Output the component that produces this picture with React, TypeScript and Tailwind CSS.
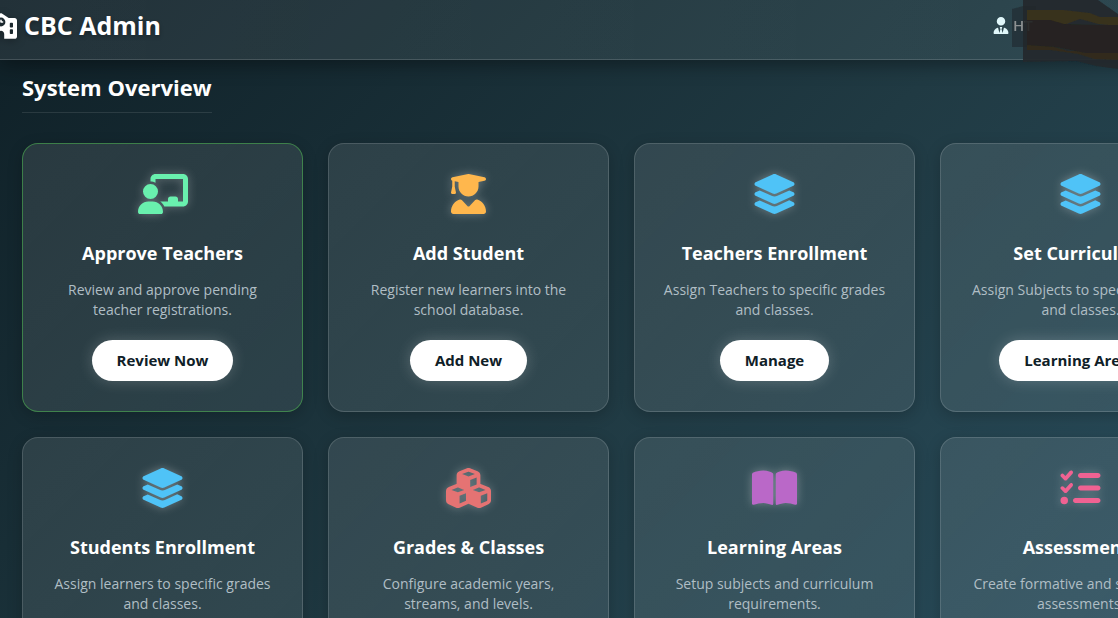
import type { IconType } from "react-icons";
import {
  FaBookOpen,
  FaChalkboardUser,
  FaCubes,
  FaLayerGroup,
  FaListCheck,
  FaSchool,
  FaUserGraduate,
  FaUserTie,
} from "react-icons/fa6";

type Item = {
  title: string;
  text: string;
  action: string;
  icon: IconType;
  tone: string;
  pending?: boolean;
};

const items: Item[] = [
  { title: "Approve Teachers", text: "Review and approve pending teacher registrations.", action: "Review Now", icon: FaChalkboardUser, tone: "w-[50px] text-[#69f0ae]", pending: true },
  { title: "Add Student", text: "Register new learners into the school database.", action: "Add New", icon: FaUserGraduate, tone: "w-[45px] text-[#ffb74d]" },
  { title: "Teachers Enrollment", text: "Assign Teachers to specific grades and classes.", action: "Manage", icon: FaLayerGroup, tone: "w-[45px] text-[#4fc3f7]" },
  { title: "Set Curriculum", text: "Assign Subjects to specific grades and classes.", action: "Learning Areas", icon: FaLayerGroup, tone: "w-[45px] text-[#4fc3f7]" },
  { title: "Students Enrollment", text: "Assign learners to specific grades and classes.", action: "Manage", icon: FaLayerGroup, tone: "w-[45px] text-[#4fc3f7]" },
  { title: "Grades & Classes", text: "Configure academic years, streams, and levels.", action: "Configure", icon: FaCubes, tone: "w-[45px] text-[#e57373]" },
  { title: "Learning Areas", text: "Setup subjects and curriculum requirements.", action: "Manage", icon: FaBookOpen, tone: "w-[45px] text-[#ba68c8]" },
  { title: "Assessments", text: "Create formative and summative assessments.", action: "Create", icon: FaListCheck, tone: "w-[45px] text-[#f06292]" },
];

function Card({ item }: { item: Item }) {
  const Icon = item.icon;
  return (
    <article
      className={`flex flex-col items-center rounded-2xl border bg-linear-135 from-white/10 to-white/8 px-[25px] py-[30px] text-center shadow-[0_4px_15px_rgba(0,0,0,0.2)] ${
        item.pending ? "border-[#4caf50]/60" : "border-white/15"
      }`}
    >
      <Icon aria-hidden className={`h-10 drop-shadow-[0_0_5px_rgba(255,255,255,0.3)] ${item.tone}`} />
      <h3 className="mt-[25px] text-lg leading-7 font-bold text-white">{item.title}</h3>
      <p className="mt-[13px] text-sm leading-5 text-[#b0bec5]">{item.text}</p>
      <button
        type="button"
        className="mt-5 h-[41px] rounded-full bg-white px-[25px] text-[15px] font-bold text-[#0f2027] shadow-[0_0_15px_rgba(255,255,255,0.2)]"
      >
        {item.action}
      </button>
    </article>
  );
}

/* Marker scribble over the account name. */
function NameCover() {
  return (
    <svg aria-hidden viewBox="0 0 108 72" className="absolute top-0 left-[1010px] h-[72px] w-[108px]">
      <defs>
        <filter id="smudge" x="-5%" y="-5%" width="110%" height="110%">
          <feGaussianBlur stdDeviation="0.7" />
        </filter>
      </defs>
      <g filter="url(#smudge)">
        <path d="M2 9L13 6H26V47H2z" fill="#20292d" opacity=".6" />
        <path d="M13 0H88L108 14V69L86 66L66 61L13 62Z" fill="#22292c" opacity=".93" />
        <path d="M17 10L54 10L80 13L90 17H108V26L88 24L70 19L54 25L17 20Z" fill="#37301f" />
        <path d="M17 42L38 45L58 51L84 51H108V60L84 59L68 54L40 50H17Z" fill="#302b1f" />
        <path d="M17 20L40 20L54 24L90 25H108V53L76 53L45 47L17 45Z" fill="#252421" />
      </g>
    </svg>
  );
}

export default function App() {
  return (
    <div className="h-screen overflow-hidden font-['Open_Sans','Noto_Sans',sans-serif]">
      <div className="w-max min-w-full bg-linear-135 from-[#0f2027] via-[#203a43] to-[#2c5364] pb-16">
        <header className="relative flex h-[60px] items-center justify-between border-b border-white/15 bg-linear-to-r from-white/8 to-white/5 pb-2 shadow-[0_4px_20px_rgba(0,0,0,0.4)]">
          <NameCover />
          <div className="-ml-[15px] flex items-center gap-[7px] text-white">
            <FaSchool aria-hidden className="h-[26px] w-8 drop-shadow-[0_2px_4px_rgba(0,0,0,0.3)]" />
            <span className="text-[25px] font-bold text-shadow-[0_2px_4px_rgba(0,0,0,0.3)]">CBC Admin</span>
          </div>
          <div className="relative flex w-[250px] items-center gap-1 text-[#e0f7fa]">
            <FaUserTie aria-hidden className="h-[17px] w-4" />
            <span className="bg-linear-to-r from-[#8d9293] from-50% to-[#2b2e2e] to-60% bg-clip-text text-[15px] font-semibold text-transparent">
              HT
            </span>
          </div>
        </header>
        <main className="px-[22px] pt-[9px]">
          <h2 className="inline-block border-b border-white/10 pb-[7px] text-[22px] leading-9 font-bold text-white">
            System Overview
          </h2>
          <div className="mt-[30px] grid grid-cols-[repeat(4,281px)] gap-[25px]">
            {items.map((item) => (
              <Card key={item.title} item={item} />
            ))}
          </div>
        </main>
      </div>
    </div>
  );
}
